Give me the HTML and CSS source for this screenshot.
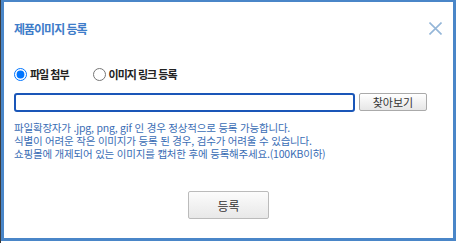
FILE: index.html
```html
<!DOCTYPE html>
<html lang="ko">

<head>
    <meta charset="UTF-8">
    <meta name="viewport" content="width=device-width, initial-scale=1.0">
    <title>제품이미지 등록</title>
    <link rel="stylesheet" href="styles.css">
</head>

<body>
    <div class="dialog">
        <div class="dialog-header">
            <h1 class="dialog-title">제품이미지 등록</h1>
            <button class="close-btn" type="button" aria-label="닫기">
                <svg width="13" height="13" viewBox="0 0 13 13">
                    <path d="M0.5 0.5 L12.5 12.5 M12.5 0.5 L0.5 12.5" stroke="#94b6d8" stroke-width="1.6" fill="none" />
                </svg>
            </button>
        </div>

        <div class="dialog-body">
            <div class="radio-row">
                <label class="radio-item">
                    <input type="radio" name="upload-type" checked>
                    <span>파일 첨부</span>
                </label>
                <label class="radio-item">
                    <input type="radio" name="upload-type">
                    <span>이미지 링크 등록</span>
                </label>
            </div>

            <div class="file-row">
                <input class="file-input" type="text">
                <button class="browse-btn" type="button">찾아보기</button>
            </div>

            <div class="notice">
                <p>파일확장자가 .jpg, png, gif 인 경우 정상적으로 등록 가능합니다.</p>
                <p>식별이 어려운 작은 이미지가 등록 된 경우, 검수가 어려울 수 있습니다.</p>
                <p>쇼핑몰에 개제되어 있는 이미지를 캡처한 후에 등록해주세요.(100KB이하)</p>
            </div>
        </div>

        <div class="dialog-footer">
            <button class="submit-btn" type="button">등록</button>
        </div>
    </div>
</body>

</html>
```

FILE: styles.css
```css
body {
    margin: 0;
    padding: 0;
    background: linear-gradient(to right, #3c3c3c 1px, #ffffff 1px);
    font-family: "Noto Sans CJK KR", "Liberation Sans", sans-serif;
}

.dialog {
    box-sizing: border-box;
    width: 455px;
    height: 242px;
    margin: -1px 0 0 1px;
    background-color: #fff;
    border: 3px solid #4a86c8;
    display: flex;
    flex-direction: column;
}

/* 헤더 */
.dialog-header {
    display: flex;
    align-items: center;
    justify-content: space-between;
    height: 52px;
    padding: 0 11px 0 10px;
}

.dialog-title {
    margin: 0;
    font-size: 12px;
    font-weight: bold;
    letter-spacing: -1px;
    color: #3d7cc9;
}

.close-btn {
    width: 13px;
    height: 13px;
    padding: 0;
    border: none;
    background: none;
    display: flex;
    cursor: pointer;
}

/* 본문 */
.dialog-body {
    padding: 0 10px;
}

.radio-row {
    display: flex;
    align-items: center;
    gap: 24px;
    height: 26px;
    margin-top: 7px;
}

.radio-item {
    display: flex;
    align-items: center;
    font-size: 11px;
    font-weight: bold;
    letter-spacing: -1px;
    color: #222;
}

.radio-item input {
    width: 13px;
    height: 13px;
    margin: 0 3px 0 0;
}

.file-row {
    display: flex;
    align-items: flex-start;
    gap: 4px;
    margin-top: 6px;
}

.file-input {
    box-sizing: border-box;
    width: 341px;
    height: 19px;
    margin: 0;
    border: 2px solid #1a56b8;
    border-radius: 3px;
    outline: none;
}

.browse-btn {
    box-sizing: border-box;
    width: 68px;
    height: 18px;
    padding: 0;
    border: 1px solid #aaa;
    border-radius: 2px;
    background: linear-gradient(to bottom, #ffffff, #e6e6e6);
    font-family: inherit;
    font-size: 11px;
    color: #333;
}

.notice {
    margin-top: 9px;
    font-size: 10.5px;
    line-height: 13px;
    letter-spacing: -0.2px;
    color: #3a6db5;
}

.notice p {
    margin: 0;
}

/* 하단 버튼 */
.dialog-footer {
    display: flex;
    justify-content: center;
    margin-top: 31px;
}

.submit-btn {
    box-sizing: border-box;
    width: 81px;
    height: 28px;
    padding: 0;
    border: 1px solid #bbb;
    border-radius: 2px;
    background: linear-gradient(to bottom, #fcfcfc, #e8e8e8);
    font-family: inherit;
    font-size: 12px;
    color: #333;
}
```
